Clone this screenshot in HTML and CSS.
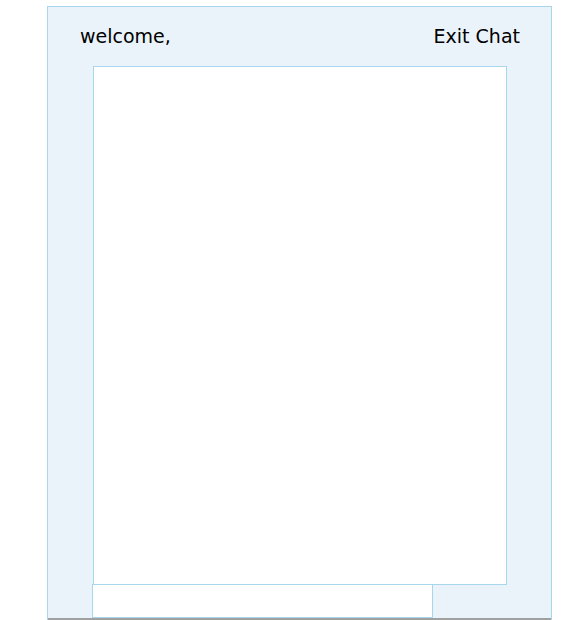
FILE: index.html
```html
<!DOCTYPE html>
<html>
<head>
<meta charset="utf-8">
<link rel="stylesheet" href="styles.css">
</head>
<body>
<div class="frame">
  <div class="header">
    <span class="welcome">welcome,</span>
    <span class="exit">Exit Chat</span>
  </div>
  <div class="chatbox"></div>
  <div class="msg"></div>
  <div class="rule"></div>
  <div class="rest"></div>
</div>
</body>
</html>
```
FILE: styles.css
```css
html, body {
  margin: 0;
  padding: 0;
  background: #ffffff;
  overflow: hidden;
}
.frame {
  margin: 6px 0 0 47px;
  width: 505px;
  box-sizing: border-box;
  border: 1px solid #a8d6ec;
  background: #eaf3fa;
  font-family: "DejaVu Sans", Verdana, sans-serif;
}
.header {
  height: 59px;
  box-sizing: border-box;
  display: flex;
  justify-content: space-between;
  align-items: center;
  padding: 0 31px 2px 32px;
  font-size: 19px;
  color: #000;
}
.chatbox {
  margin-left: 45px;
  width: 414px;
  height: 519px;
  box-sizing: border-box;
  border: 1px solid #a8d6ec;
  background: #ffffff;
}
.msg {
  margin-left: 44px;
  margin-top: -1px;
  width: 341px;
  height: 34px;
  box-sizing: border-box;
  border: 1px solid #a8d6ec;
  background: #ffffff;
}
.rule {
  height: 2px;
  background: #a0a0a0;
}
.rest {
  height: 40px;
}
```
